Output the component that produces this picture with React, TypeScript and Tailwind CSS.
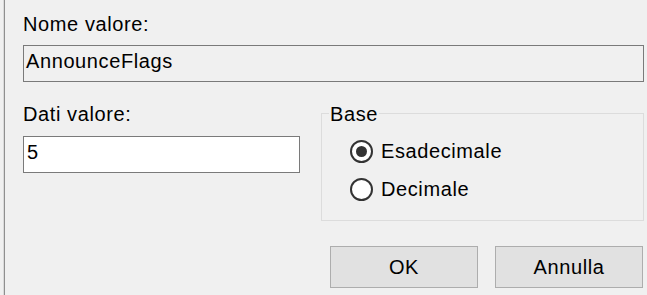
import React from "react";

function Radio({ checked, label }: { checked?: boolean; label: string }) {
  return (
    <div className="flex h-[38px] items-center gap-[8px]">
      <div className="flex h-[23px] w-[23px] items-center justify-center rounded-full border-2 border-[#333333] bg-white">
        {checked && <div className="h-[11px] w-[11px] rounded-full bg-[#333333]" />}
      </div>
      <span className="leading-[24px]">{label}</span>
    </div>
  );
}

export default function App() {
  return (
    <div className="flex h-[295px] w-[647px] overflow-hidden bg-[#f0f0f0] font-['Liberation_Sans',Arial,sans-serif] text-[20px] tracking-[0.6px] text-black">
      <div className="ml-[3px] w-px bg-[#dadada]" />
      <div className="w-px bg-[#8f8f8f]" />
      <div className="flex flex-1 flex-col pl-[18px] pr-[3px] pt-[12px]">
        <div className="h-[24px] leading-[24px]">Nome valore:</div>
        <div className="mt-[9px] h-[37px] border border-[#7a7a7a] pl-[2px] pt-[3px] leading-[24px]">
          AnnounceFlags
        </div>
        <div className="mt-[20px] flex gap-[21px]">
          <div className="flex w-[277px] flex-col">
            <div className="h-[24px] leading-[24px]">Dati valore:</div>
            <div className="mt-[10px] h-[37px] border border-[#7a7a7a] bg-white pl-[3px] pt-[3px] leading-[24px]">
              5
            </div>
          </div>
          <div className="relative mt-[11px] h-[108px] flex-1 border border-[#dcdcdc] pl-[28px] pt-[18px]">
            <span className="absolute left-[7px] top-[-12px] bg-[#f0f0f0] px-px leading-[24px]">Base</span>
            <Radio checked label="Esadecimale" />
            <Radio label="Decimale" />
          </div>
        </div>
        <div className="mt-[25px] flex justify-end gap-[17px] pr-px">
          <button className="h-[42px] w-[148px] border border-[#adadad] bg-[#e1e1e1] leading-[24px]">OK</button>
          <button className="h-[42px] w-[148px] border border-[#adadad] bg-[#e1e1e1] leading-[24px]">Annulla</button>
        </div>
      </div>
    </div>
  );
}
